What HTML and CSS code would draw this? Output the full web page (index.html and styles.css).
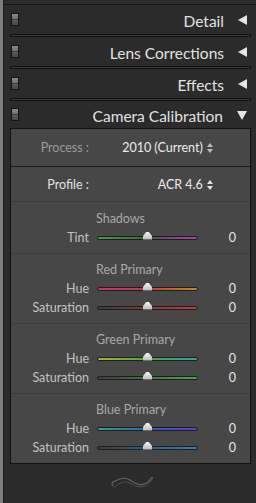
FILE: index.html
```html
<!DOCTYPE html>
<html lang="en">
  <head>
    <meta charset="UTF-8" />
    <title>Develop Panels</title>
    <link rel="stylesheet" href="styles.css">
  </head>
  <body>
    <div class="edge"></div>
    <div class="panels">
      <div class="top_cap"></div>

      <div class="panel_head">
        <span class="toggle"></span>
        <span class="title">Detail</span>
        <span class="arrow arrow_left"></span>
      </div>
      <div class="head_bar"></div>

      <div class="panel_head">
        <span class="toggle"></span>
        <span class="title">Lens Corrections</span>
        <span class="arrow arrow_left"></span>
      </div>
      <div class="head_bar"></div>

      <div class="panel_head">
        <span class="toggle"></span>
        <span class="title">Effects</span>
        <span class="arrow arrow_left"></span>
      </div>
      <div class="head_bar"></div>

      <div class="panel_head last_head">
        <span class="toggle"></span>
        <span class="title">Camera Calibration</span>
        <span class="arrow arrow_down"></span>
      </div>

      <div class="calib">
        <div class="pick_row process_row">
          <span class="pick_label dim">Process :</span>
          <span class="pick_value">2010 (Current)
            <svg class="updown" width="6" height="10" viewBox="0 0 6 10"><path d="M3 0 L6 4 L0 4 Z M0 6 L6 6 L3 10 Z" fill="#bcbcbc" /></svg>
          </span>
        </div>
        <div class="pick_row profile_row">
          <span class="pick_label">Profile :</span>
          <span class="pick_value">ACR 4.6
            <svg class="updown" width="6" height="10" viewBox="0 0 6 10"><path d="M3 0 L6 4 L0 4 Z M0 6 L6 6 L3 10 Z" fill="#e0e0e0" /></svg>
          </span>
        </div>

        <div class="group first_group">
          <div class="group_title">Shadows</div>
          <div class="slider_row">
            <span class="s_label">Tint</span>
            <span class="track tint"><span class="thumb"></span></span>
            <span class="s_value">0</span>
          </div>
        </div>

        <div class="group">
          <div class="group_title">Red Primary</div>
          <div class="slider_row">
            <span class="s_label">Hue</span>
            <span class="track red_hue"><span class="thumb"></span></span>
            <span class="s_value">0</span>
          </div>
          <div class="slider_row">
            <span class="s_label">Saturation</span>
            <span class="track red_sat"><span class="thumb"></span></span>
            <span class="s_value">0</span>
          </div>
        </div>

        <div class="group">
          <div class="group_title">Green Primary</div>
          <div class="slider_row">
            <span class="s_label">Hue</span>
            <span class="track green_hue"><span class="thumb"></span></span>
            <span class="s_value">0</span>
          </div>
          <div class="slider_row">
            <span class="s_label">Saturation</span>
            <span class="track green_sat"><span class="thumb"></span></span>
            <span class="s_value">0</span>
          </div>
        </div>

        <div class="group">
          <div class="group_title">Blue Primary</div>
          <div class="slider_row">
            <span class="s_label">Hue</span>
            <span class="track blue_hue"><span class="thumb"></span></span>
            <span class="s_value">0</span>
          </div>
          <div class="slider_row">
            <span class="s_label">Saturation</span>
            <span class="track blue_sat"><span class="thumb"></span></span>
            <span class="s_value">0</span>
          </div>
        </div>
      </div>

      <div class="end_mark">
        <svg width="46" height="18" viewBox="0 0 46 18">
          <path d="M4 14 C2 13 3 10 6 9 C11 6 16 5 21 8 C26 11 29 14 35 12 C39 11 41 8 42 6 C43 5 44 6 43 7" fill="none" stroke="#666" stroke-width="1.1" />
          <path d="M5 15 C9 12 15 8 21 11 C26 14 30 16 36 14 C40 12 42 9 43 7" fill="none" stroke="#505050" stroke-width="1" />
        </svg>
      </div>
    </div>
  </body>
</html>
```

FILE: styles.css
```css
html,
body {
  margin: 0;
  padding: 0;
  height: 100%;
  background-color: #2b2b2b;
  font-family: Lato, "Open Sans", sans-serif;
}

body {
  display: flex;
}

.edge {
  width: 3px;
  background-color: #7e7e7e;
  border-right: 1px solid #1c1c1c;
}

.panels {
  flex: 1;
  display: flex;
  flex-direction: column;
  padding: 0 5px 0 6px;
}

.top_cap {
  height: 4px;
  border-bottom: 1px solid #161616;
  margin: 0 -5px 0 -6px;
}

.panel_head {
  height: 29px;
  display: flex;
  align-items: center;
  padding: 0 4px 0 1px;
}

.last_head {
  height: 27px;
}

.toggle {
  width: 6px;
  height: 11px;
  border: 1px solid #141414;
  background: linear-gradient(#8c8c8c, #6e6e6e 45%, #3a3a3a 50%, #5a5a5a 55%, #4a4a4a);
}

.title {
  flex: 1;
  text-align: right;
  color: #e2e2e2;
  font-size: 15.5px;
  padding-right: 14px;
  margin-top: 2px;
}

.arrow {
  width: 0;
  height: 0;
  margin-top: 1px;
}

.arrow_left {
  border-top: 5px solid transparent;
  border-bottom: 5px solid transparent;
  border-right: 9px solid #e4e4e4;
}

.arrow_down {
  border-left: 5px solid transparent;
  border-right: 5px solid transparent;
  border-top: 9px solid #e4e4e4;
}

.head_bar {
  height: 1px;
  border: 1px solid #111;
  background-color: #3a3a3a;
}

.calib {
  border: 1px solid #121212;
  background-color: #474747;
  font-size: 12.5px;
}

.pick_row {
  display: grid;
  grid-template-columns: 78px 1fr;
  align-items: center;
  padding-right: 37px;
}

.process_row {
  height: 37px;
  border-bottom: 1px solid #1a1a1a;
}

.profile_row {
  height: 34px;
}

.pick_label {
  text-align: right;
  color: #e2e2e2;
}

.pick_label.dim {
  color: #9c9c9c;
}

.pick_value {
  text-align: right;
  color: #ececec;
}

.updown {
  margin-left: 1px;
  vertical-align: -1px;
}

.group {
  border-top: 1px solid #3c3c3c;
  padding: 7px 0 6px;
}

.first_group {
  padding: 8px 0 6px;
}

.group_title {
  height: 18px;
  line-height: 18px;
  padding-left: 85px;
  color: #a8a8a8;
}

.slider_row {
  height: 19px;
  display: grid;
  grid-template-columns: 78px 101px 1fr;
  column-gap: 8px;
  align-items: center;
  padding-right: 14px;
}

.s_label {
  text-align: right;
  color: #c2c2c2;
}

.s_value {
  text-align: right;
  color: #e6e6e6;
}

.track {
  position: relative;
  height: 2px;
  border: 1px solid #1e1e1e;
  border-radius: 2px;
}

.thumb {
  position: absolute;
  left: 45px;
  top: -5px;
  width: 9px;
  height: 8px;
  background: linear-gradient(#f4f4f4, #b8b8b8);
  clip-path: polygon(40% 0, 60% 0, 100% 55%, 100% 100%, 0 100%, 0 55%);
}

.tint {
  background: linear-gradient(to right, #3fa23f, #3a6a3a 45%, #5a4a5a 55%, #b23cb2);
}

.red_hue {
  background: linear-gradient(to right, #c2367a, #c23c3c 50%, #c08a2c);
}

.red_sat {
  background: linear-gradient(to right, #3c3c3c, #c23a3a);
}

.green_hue {
  background: linear-gradient(to right, #a6b432, #48a848 50%, #2ca4a4);
}

.green_sat {
  background: linear-gradient(to right, #3c3c3c, #4aa84a);
}

.blue_hue {
  background: linear-gradient(to right, #34a482, #3458c2 55%, #6a3cc4);
}

.blue_sat {
  background: linear-gradient(to right, #3c3c3c, #3480c0);
}

.end_mark {
  display: flex;
  justify-content: center;
  padding: 8px 0 0 2px;
}
```
